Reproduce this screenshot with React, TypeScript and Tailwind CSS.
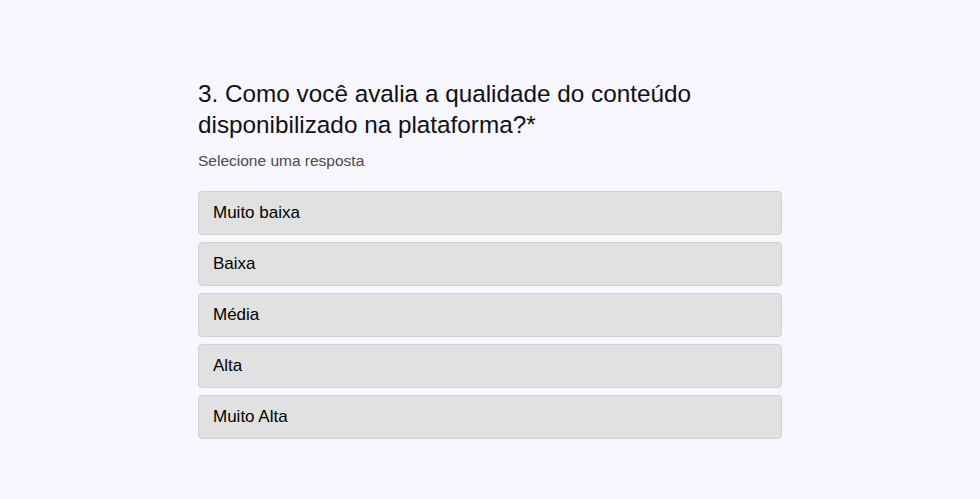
import React from "react";

const options = ["Muito baixa", "Baixa", "Média", "Alta", "Muito Alta"];

export default function App() {
  return (
    <div
      className="min-h-[499px] w-full bg-[#f8f6fe] flex justify-center"
      style={{ fontFamily: '"Liberation Sans", Arial, sans-serif' }}
    >
      <div className="w-[584px] pt-[78px]">
        <h1 className="text-[24.3px] leading-[31px] text-[#111] font-normal">
          3. Como você avalia a qualidade do conteúdo disponibilizado na plataforma?*
        </h1>
        <p className="mt-[11px] text-[15.5px] leading-[20px] text-[#4a4a4a]">Selecione uma resposta</p>
        <div className="mt-[20px] flex flex-col gap-[7px]">
          {options.map((o) => (
            <button
              key={o}
              className="h-[44px] w-full rounded-[4px] border border-[#d2d2d2] bg-[#e1e1e1] px-[14px] text-left text-[17px] text-black"
            >
              {o}
            </button>
          ))}
        </div>
      </div>
    </div>
  );
}
